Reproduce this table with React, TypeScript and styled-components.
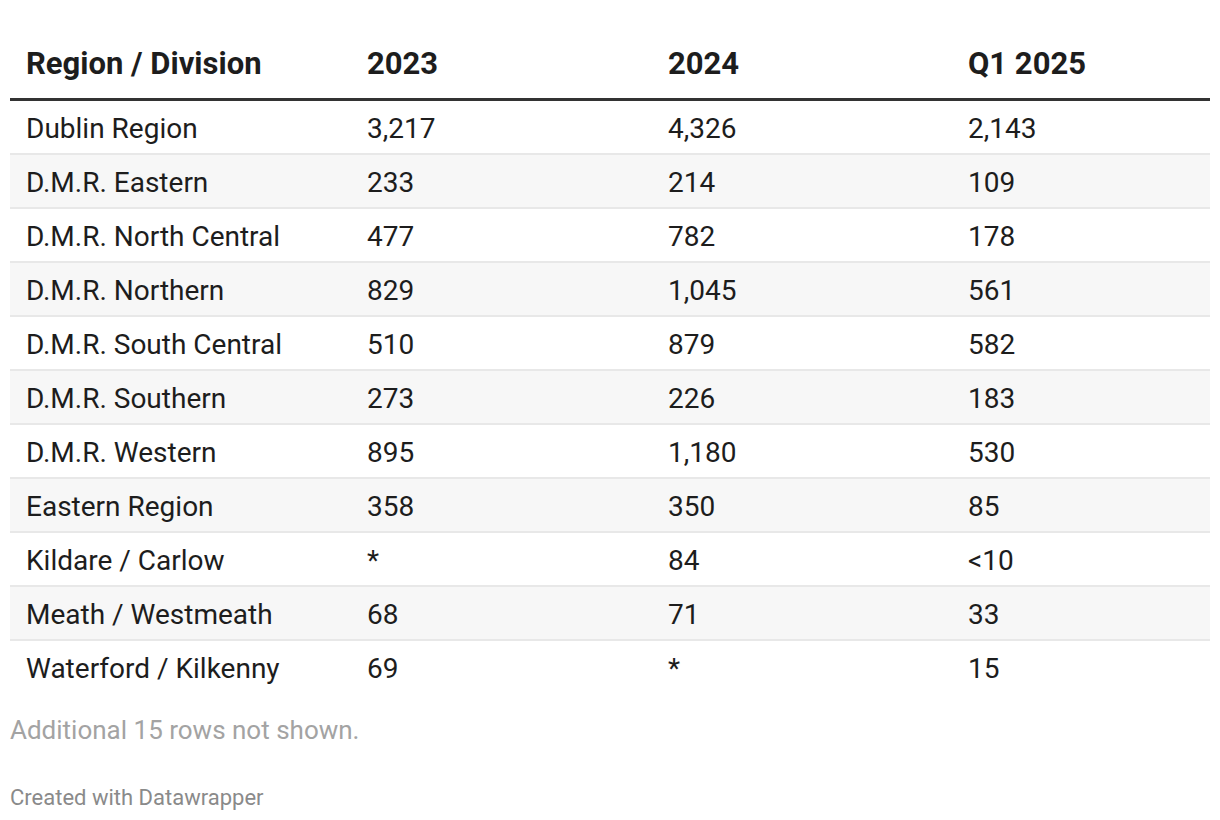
import styled, { createGlobalStyle } from 'styled-components'

const GlobalStyle = createGlobalStyle`
  html, body {
    margin: 0;
    padding: 0;
    background: #ffffff;
  }
  body {
    font-family: Roboto, "Liberation Sans", Arial, sans-serif;
    color: #181818;
  }
`

const Root = styled.div`
  box-sizing: border-box;
  width: 1220px;
  padding: 39px 10px 0 10px;
`

const Table = styled.table`
  width: 1200px;
  border-collapse: collapse;
  table-layout: fixed;
`

const HeadCell = styled.th`
  box-sizing: border-box;
  text-align: left;
  font-weight: 700;
  font-size: 31px;
  line-height: 34px;
  padding: 8px 16px 17px 16px;
  color: #1d1d1d;
  border-bottom: 3px solid #333333;
  white-space: nowrap;
`

const Row = styled.tr<{ $striped: boolean; $last: boolean }>`
  background: ${p => (p.$striped ? '#f7f7f7' : '#ffffff')};
  border-bottom: ${p => (p.$last ? 'none' : '2px solid #e8e8e8')};
`

const Cell = styled.td`
  box-sizing: border-box;
  font-size: 28px;
  line-height: 32px;
  padding: 12px 16px 8px 16px;
  color: #1d1d1d;
  white-space: nowrap;
`

const Note = styled.div`
  font-size: 26px;
  color: #a3a3a3;
  margin-top: 22px;
  line-height: 30px;
`

const Credit = styled.div`
  font-size: 22px;
  color: #8a8a8a;
  margin-top: 41px;
  line-height: 24px;
`

const columns = [
  { label: 'Region / Division', width: 341 },
  { label: '2023', width: 301 },
  { label: '2024', width: 300 },
  { label: 'Q1 2025', width: 258 },
]

const rows = [
  ['Dublin Region', '3,217', '4,326', '2,143'],
  ['D.M.R. Eastern', '233', '214', '109'],
  ['D.M.R. North Central', '477', '782', '178'],
  ['D.M.R. Northern', '829', '1,045', '561'],
  ['D.M.R. South Central', '510', '879', '582'],
  ['D.M.R. Southern', '273', '226', '183'],
  ['D.M.R. Western', '895', '1,180', '530'],
  ['Eastern Region', '358', '350', '85'],
  ['Kildare / Carlow', '*', '84', '<10'],
  ['Meath / Westmeath', '68', '71', '33'],
  ['Waterford / Kilkenny', '69', '*', '15'],
]

export default function App() {
  return (
    <>
      <GlobalStyle />
      <Root>
        <Table>
          <colgroup>
            {columns.map(c => <col key={c.label} style={{ width: c.width }} />)}
          </colgroup>
          <thead>
            <tr>
              {columns.map(c => <HeadCell key={c.label}>{c.label}</HeadCell>)}
            </tr>
          </thead>
          <tbody>
            {rows.map((r, i) => (
              <Row key={r[0]} $striped={i % 2 === 1} $last={i === rows.length - 1}>
                {r.map((v, j) => <Cell key={j}>{v}</Cell>)}
              </Row>
            ))}
          </tbody>
        </Table>
        <Note>Additional 15 rows not shown.</Note>
        <Credit>Created with Datawrapper</Credit>
      </Root>
    </>
  )
}
